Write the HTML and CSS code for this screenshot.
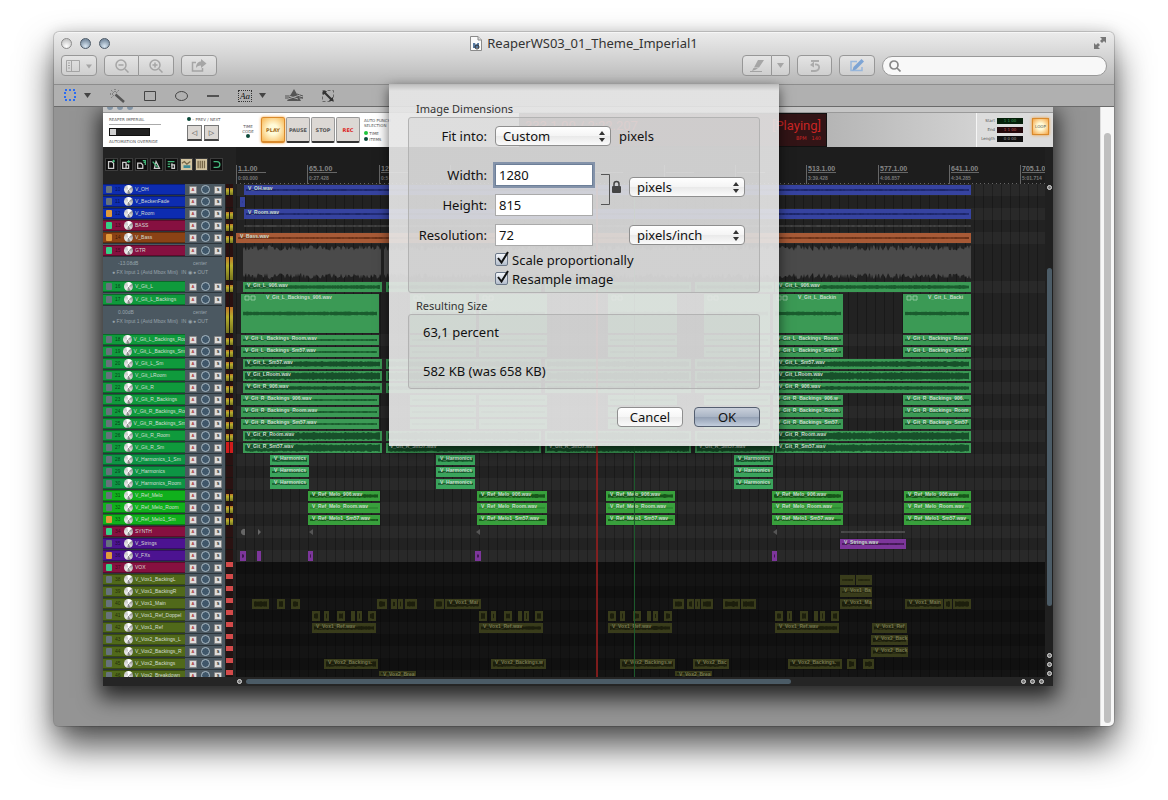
FILE: index.html
```html
<!DOCTYPE html>
<html lang="en">
<head>
  <meta charset="UTF-8">
  <meta name="viewport" content="width=device-width, initial-scale=1.0">
  <title>ReaperWS03_01_Theme_Imperial1</title>
  <link rel="stylesheet" href="styles.css">
</head>
<body>
  <main class="window">
    <header class="chrome">
      <div class="titlebar">
        <div class="lights">
          <button class="light idle" aria-label="Close"></button>
          <button class="light" aria-label="Minimize"></button>
          <button class="light" aria-label="Zoom"></button>
        </div>
        <h1 class="title">
          <svg width="12" height="15" viewBox="0 0 12 15"><path d="M.5.5h7.500l3.500 3.500v10.500H.5z" fill="#fafafa" stroke="#8a8a8a"/><path d="M8 .5V4h3.500" fill="#ddd" stroke="#8a8a8a"/><path d="M3 7h2l1 2 1.500-2H9v5H3z" fill="#56789f"/><circle cx="7" cy="11" r="2" fill="none" stroke="#333"/></svg>
          ReaperWS03_01_Theme_Imperial1
        </h1>
        <button class="fullscreen" aria-label="Full screen">
          <svg width="14" height="14" viewBox="0 0 14 14" fill="#777"><path d="M7 1h6v6l-2-2-2 2-2-2 2-2zM1 7l2 2 2-2 2 2-2 2 2 2H1z"/></svg>
        </button>
      </div>
      <div class="toolbar">
        <button class="tool wide" aria-label="Sidebar">
          <svg width="26" height="12" viewBox="0 0 26 12" fill="none" stroke="#999"><path d="M.5.5h13v11H.500zM5.500 1v10"/><path d="M2 3h2M2 5.500h2M2 8h2"/><path d="M20 4.500h6l-3 4z" fill="#999" stroke="none"/></svg>
        </button>
        <div class="segment">
          <button class="tool" aria-label="Zoom out"><svg width="14" height="14" viewBox="0 0 14 14" fill="none" stroke="#999" stroke-width="1.500"><circle cx="6" cy="6" r="5"/><path d="M10 10l3.500 3.500M3.500 6h5"/></svg></button>
          <button class="tool" aria-label="Zoom in"><svg width="14" height="14" viewBox="0 0 14 14" fill="none" stroke="#999" stroke-width="1.500"><circle cx="6" cy="6" r="5"/><path d="M10 10l3.500 3.500M3.500 6h5M6 3.500v5"/></svg></button>
        </div>
        <button class="tool wide" aria-label="Share">
          <svg width="16" height="13" viewBox="0 0 16 13"><path d="M5 3.500H1.500v8.500h10V9" fill="none" stroke="#999" stroke-width="1.500"/><path d="M10 0l5.500 4.500L10 9V6.500C7 6.500 6 7.500 5 9c0-4 2-6.500 5-6.500z" fill="#999"/></svg>
        </button>
        <span class="spacer"></span>
        <div class="segment">
          <button class="tool mark" aria-label="Highlight"><svg width="15" height="12" viewBox="0 0 15 12" fill="#999"><path d="M8 0h6L9 7.500H4zM3.500 8H8l-2 1.500L2 11zM0 11h12v1H0z"/></svg></button>
          <button class="tool arrow" aria-label="Highlight colour"><svg width="7" height="5" viewBox="0 0 7 5"><path d="M0 0h7L3.500 5z" fill="#999"/></svg></button>
        </div>
        <button class="tool rotate" aria-label="Rotate"><svg width="12" height="12" viewBox="0 0 12 12"><path d="M2 1h8M6 4.500c6-.5 5 6 0 6.500H2" fill="none" stroke="#a0a0a0" stroke-width="1.800"/><path d="M1 5l4-3.500v6z" fill="#a0a0a0"/></svg></button>
        <button class="tool wide edit" aria-label="Edit"><svg width="16" height="14" viewBox="0 0 16 14"><path d="M8 2.500H2v9h11V8" fill="none" stroke="#8ab0dd" stroke-width="1.500"/><path d="M12.500 0L15 2.500 7 10.500l-3.500 1 1-3.500z" fill="#6697d3"/></svg></button>
        <label class="search">
          <svg width="12" height="12" viewBox="0 0 12 12" fill="none" stroke="#888" stroke-width="1.700"><circle cx="5" cy="5" r="4"/><path d="M8 8l3.500 3.500"/></svg>
          <input type="search" aria-label="Search">
        </label>
      </div>
    </header>

    <nav class="markup" aria-label="Markup tools">
      <button aria-label="Selection"><svg width="27" height="13" viewBox="0 0 27 13"><rect x="1" y="1" width="10" height="10" fill="none" stroke="#2b6cf0" stroke-width="2" stroke-dasharray="2 2"/><path d="M20 4h7l-3.500 5z" fill="#444"/></svg></button>
      <button aria-label="Instant alpha"><svg width="15" height="14" viewBox="0 0 15 14" stroke="#555" fill="none"><path d="M5.500 5.500l8.500 7.500" stroke-width="2.500"/><path d="M5 0v3M0 5h3M1.500 1.500l2 2M8.500 1.500l-2 2M1.500 8.500l2-2" stroke-dasharray="1 1"/></svg></button>
      <button aria-label="Rectangle"><svg width="12" height="10" viewBox="0 0 12 10"><path d="M.5.5h11v9H.500z" fill="none" stroke="#444"/></svg></button>
      <button aria-label="Oval"><svg width="13" height="10" viewBox="0 0 13 10"><ellipse cx="6.500" cy="5" rx="6" ry="4.500" fill="none" stroke="#444"/></svg></button>
      <button aria-label="Line"><svg width="12" height="4" viewBox="0 0 12 4"><path d="M0 2h12" stroke="#333" stroke-width="1.500"/></svg></button>
      <button class="text-tool" aria-label="Text"><span class="aa">Aa</span><svg width="7" height="5" viewBox="0 0 7 5"><path d="M0 0h7L3.500 5z" fill="#444"/></svg></button>
      <button aria-label="Adjust color"><svg width="18" height="13" viewBox="0 0 18 13"><path d="M9 0l7 12H2z" fill="#555"/><path d="M0 7l6 0M0 9h5M12 5l6 2M12 7l6 2M12 9h6" stroke="#555"/><path d="M3 10l12-4M4 7l9 3" stroke="#aaa"/></svg></button>
      <button aria-label="Adjust size"><svg width="12" height="12" viewBox="0 0 12 12"><path d="M.5.5h11v11H.500z" fill="none" stroke="#666" stroke-dasharray="3 2"/><path d="M1 1h4L4 2.500 9.500 8 11 7v4H7l1-1.500L2.500 4 1 5z" fill="#333"/></svg></button>
    </nav>

    <section class="viewer">
      <div class="page">
        <div class="daw-title"><i></i><i></i><i></i></div>
        <div class="transport">
          <div class="brand">
            <span class="tiny ruled">REAPER IMPERIAL</span>
            <span class="fader"></span>
            <span class="tiny">AUTOMATION OVERRIDE</span>
          </div>
          <div class="skip">
            <div class="tiny"><i class="led"></i> – PREV / NEXT</div>
            <div class="pair">
              <span class="key">◁</span>
              <span class="key">▷</span>
            </div>
          </div>
          <div class="timecode tiny">TIME<br>CODE<br><i class="led"></i></div>
          <div class="keys">
            <span class="key big play">PLAY</span>
            <span class="key big">PAUSE</span>
            <span class="key big">STOP</span>
            <span class="key big rec">REC</span>
          </div>
          <div class="punch tiny">AUTO PUNCH<br>SELECTION
            <div class="modes"><i class="led on"></i> TIME<br><i class="led"></i> ITEMS</div>
          </div>
          <div class="display">
            <div class="readout"><span>333.1.00 / 2:22.207</span><span>[Playing]</span></div>
            <div class="bpm">BPM &nbsp; 140</div>
          </div>
          <div class="plate"></div>
          <div class="range">
            <dl>
              <dt>Start</dt><dd class="green">1 1 00</dd>
              <dt>End</dt><dd class="red">1 1 00</dd>
              <dt>Length</dt><dd>0 0 00</dd>
            </dl>
            <span class="loop">LOOP</span>
          </div>
        </div>

        <div class="desk">
          <div class="mixer">
            <div class="icons">
              <svg viewBox="0 0 13 13"><path d="M3 3h4l2 2v6H3z"/><path class="g" d="M9 1v3M7.500 2.500h3"/></svg>
              <svg viewBox="0 0 13 13"><path d="M2 4h4v7H2zM6 7h3v4H6"/><path class="g" d="M7 3h4M9 1.500v3"/></svg>
              <svg viewBox="0 0 13 13"><path d="M2 5h4l2 2v4H2z"/><path class="g" d="M8 2h3v5M9 4h2"/></svg>
              <svg viewBox="0 0 13 13"><path d="M4 11l2-8 4 8z"/><path class="g" d="M2 3l6 7"/></svg>
              <svg viewBox="0 0 13 13"><path class="g" d="M2 3h8M2 6h3M2 9h3"/><path d="M7 5v6h3V7H6"/></svg>
              <svg class="lit" viewBox="0 0 13 13"><path class="d" d="M1 5l3-2 3 3 4-3"/><path class="t" d="M3 9h8"/></svg>
              <svg class="lit" viewBox="0 0 13 13"><path class="d" d="M2.500 2v9M5 2v9M7.500 2v9M10 2v9"/></svg>
              <svg viewBox="0 0 13 13"><path class="g" d="M3 3h4a3.500 3.500 0 0 1 0 7H3"/></svg>
            </div>
            <ul class="tracks" id="tracks"></ul>
          </div>
          <div class="arrange">
            <svg id="timeline" width="810" height="530" aria-label="Arrangement"></svg>
          </div>
          <div class="vscroll">
            <i class="nub"></i>
            <span class="vthumb"></span>
            <span class="nubs"><i class="nub"></i><i class="nub"></i><i class="nub"></i></span>
          </div>
        </div>
        <div class="hscroll">
          <i class="nub"></i>
          <span class="hthumb"></span>
          <span class="nubs"><i class="nub"></i><i class="nub"></i><i class="nub"></i></span>
        </div>
      </div>
      <div class="scroller"><span></span></div>
    </section>

    <form class="sheet" role="dialog" aria-label="Adjust size">
      <fieldset>
        <legend>Image Dimensions</legend>
        <div class="group">
          <div class="fit">
            <label for="fit">Fit into:</label>
            <span class="select">
              <select id="fit"><option>Custom</option></select>
              <svg width="6" height="11" viewBox="0 0 6 11"><path d="M0 4l3-4 3 4zM0 7l3 4 3-4z" fill="#333"/></svg>
            </span>
            <span>pixels</span>
          </div>
          <div class="sizes">
            <label for="width">Width:</label>
            <input class="focused" id="width" type="text" value="1280">
            <div class="link">
              <svg width="24" height="32" viewBox="0 0 24 32"><path d="M0 .5h8.500v30H0" fill="none" stroke="#555"/><rect x="11" y="12" width="9" height="7" rx="1" fill="#444"/><path d="M13 12v-2a2.500 2.500 0 0 1 5 0v2" fill="none" stroke="#444" stroke-width="1.500"/></svg>
            </div>
            <span class="select unit">
              <select aria-label="Size unit"><option>pixels</option></select>
              <svg width="6" height="11" viewBox="0 0 6 11"><path d="M0 4l3-4 3 4zM0 7l3 4 3-4z" fill="#333"/></svg>
            </span>
            <label for="height">Height:</label>
            <input id="height" type="text" value="815">
            <label for="resolution">Resolution:</label>
            <input id="resolution" type="text" value="72">
            <span class="select res">
              <select aria-label="Resolution unit"><option>pixels/inch</option></select>
              <svg width="6" height="11" viewBox="0 0 6 11"><path d="M0 4l3-4 3 4zM0 7l3 4 3-4z" fill="#333"/></svg>
            </span>
          </div>
          <div class="checks">
            <label><span class="check"><input type="checkbox" checked><svg width="15" height="15" viewBox="0 0 15 15"><path d="M3 7l3.500 4.500L13 1" fill="none" stroke="#111" stroke-width="2"/></svg></span>Scale proportionally</label>
            <label><span class="check"><input type="checkbox" checked><svg width="15" height="15" viewBox="0 0 15 15"><path d="M3 7l3.500 4.500L13 1" fill="none" stroke="#111" stroke-width="2"/></svg></span>Resample image</label>
          </div>
        </div>
      </fieldset>
      <fieldset>
        <legend>Resulting Size</legend>
        <div class="group result">
          <p>63,1 percent</p>
          <p>582 KB (was 658 KB)</p>
        </div>
      </fieldset>
      <div class="actions">
        <button type="button">Cancel</button>
        <button type="button" class="default">OK</button>
      </div>
    </form>
  </main>

  <script src="tracks.js"></script>
</body>
</html>
```
FILE: styles.css
```css
* {
  box-sizing: border-box;
}

body {
  margin: 0;
  padding: 32px 54px 74px;
  background: #fff;
  color: #111;
  font-family: "Noto Sans", "Open Sans", sans-serif;
  font-size: 13px;
  overflow-x: hidden;
}

button,
input,
select {
  font: inherit;
  color: inherit;
  margin: 0;
}

button {
  padding: 0;
  border: none;
  background: none;
}

.window {
  position: relative;
  border-radius: 5px;
  background: #949494;
  box-shadow: 0 0 0 1px rgba(0, 0, 0, 0.15), 0 0 14px rgba(0, 0, 0, 0.15), 0 20px 36px rgba(0, 0, 0, 0.7);
}

/* title bar and toolbar */
.chrome {
  padding: 0 7px 8px;
  background: linear-gradient(#ebebeb, #d2d2d2 50%, #b6b6b6);
  border-top: 1px solid #f6f6f6;
  border-bottom: 1px solid #8c8c8c;
  border-radius: 5px 5px 0 0;
}

.titlebar {
  display: grid;
  grid-template-columns: 1fr auto 1fr;
  align-items: center;
  height: 20px;
}

.lights {
  display: flex;
  gap: 8px;
}

.light {
  width: 11px;
  height: 11px;
  border: 1px solid #4d5a67;
  border-radius: 50%;
  background: radial-gradient(circle at 50% 80%, #d8e6f2, #7d90a3 75%);
}

.light.idle {
  border-color: #8b8b8b;
  background: radial-gradient(circle at 50% 80%, #fff, #c8c8c8 75%);
}

.title {
  display: flex;
  align-items: center;
  gap: 5px;
  margin: 0;
  font-size: 13px;
  font-weight: 400;
  color: #333;
}

.fullscreen {
  justify-self: end;
  display: flex;
}

.toolbar {
  display: flex;
  align-items: center;
  gap: 7px;
  margin-top: 2px;
}

.spacer {
  flex: 1;
}

.tool {
  display: flex;
  align-items: center;
  justify-content: center;
  width: 35px;
  height: 21px;
  border: 1px solid #979797;
  border-radius: 4px;
  background: linear-gradient(#e4e4e4, #cfcfcf);
}

.tool svg {
  opacity: 0.8;
}

.tool.wide {
  width: 36px;
}

.tool.mark {
  width: 30px;
}

.tool.arrow {
  width: 18px;
}

.segment {
  display: flex;
}

.segment .tool:first-child {
  border-radius: 4px 0 0 4px;
}

.segment .tool:last-child {
  border-left: none;
  border-radius: 0 4px 4px 0;
}

.search {
  display: flex;
  align-items: center;
  gap: 6px;
  width: 225px;
  height: 20px;
  padding: 0 6px;
  border: 1px solid #999;
  border-radius: 10px;
  background: #f8f8f8;
}

.search input {
  flex: 1;
  min-width: 0;
  border: none;
  outline: none;
  background: none;
}

.markup {
  display: flex;
  align-items: center;
  gap: 19px;
  height: 22px;
  padding: 0 10px;
  background: #b0b0b0;
  border-bottom: 1px solid #6a6a6a;
}

.markup button {
  display: flex;
  align-items: center;
}

.markup .text-tool {
  gap: 7px;
}

.aa {
  padding: 0 1px;
  border: 1px dotted #333;
  font: italic 9px/10px "Liberation Serif", serif;
}

/* document */
.viewer {
  display: flex;
  background: #949494;
  border-radius: 0 0 5px 5px;
  overflow: hidden;
}

.page {
  flex: 1;
  min-width: 0;
  margin: 0 47px 40px 49px;
  background: #222;
  box-shadow: 0 8px 20px 4px rgba(0, 0, 0, 0.75);
  font-family: "DejaVu Sans", sans-serif;
}

.scroller {
  width: 14px;
  padding: 26px 3px 3px;
  background: #f7f7f7;
  border-left: 1px solid #ddd;
}

.scroller span {
  display: block;
  height: 100%;
  border-radius: 4px;
  background: #bfbfbf;
}

.daw-title {
  display: flex;
  gap: 4px;
  height: 6px;
  padding-left: 4px;
  background: #c6c6c6;
  border-bottom: 1px solid #999;
}

.daw-title i {
  width: 6px;
  height: 3px;
  border-radius: 0 0 3px 3px;
  background: #8294a5;
}

.transport {
  display: flex;
  height: 34px;
  background: linear-gradient(90deg, #fff, #fff 30%, #ddd);
  color: #555;
}

.tiny {
  font-size: 4px;
  line-height: 5px;
}

.brand {
  display: flex;
  flex-direction: column;
  justify-content: space-between;
  width: 78px;
  padding: 4px 0 3px 6px;
}

.ruled {
  width: 52px;
  padding-bottom: 2px;
  border-bottom: 1px solid #aaa;
}

.fader {
  width: 41px;
  height: 8px;
  background: linear-gradient(90deg, #d0d0d0 6px, #222 6px);
  border: 1px solid #111;
}

.skip {
  width: 56px;
  padding: 4px 0 0 6px;
}

.pair {
  display: flex;
  gap: 2px;
  margin-top: 3px;
}

.key {
  display: flex;
  align-items: center;
  justify-content: center;
  width: 15px;
  height: 16px;
  border: 1px solid #777;
  border-bottom: 2px solid #444;
  background: #dcd8d4;
  color: #333;
  font-size: 7px;
}

.led {
  display: inline-block;
  width: 4px;
  height: 4px;
  border-radius: 50%;
  background: #0c4a3a;
}

.led.on {
  background: #1fc43c;
}

.timecode {
  width: 22px;
  padding-top: 11px;
  text-align: center;
}

.keys {
  display: flex;
  gap: 1px;
  width: 101px;
  padding: 4px 0 0 2px;
}

.key.big {
  width: 24px;
  height: 26px;
  border-color: #999;
  border-bottom-color: #333;
  border-radius: 2px;
  font-size: 5px;
  font-weight: 700;
  color: #555;
}

.key.play {
  border-color: #d98a2c;
  background: radial-gradient(#fffbd8 30%, #f8b550);
  box-shadow: 0 0 3px #f09a30;
  color: #a06a20;
}

.key.rec {
  color: #d22;
}

.punch {
  flex: 1;
  padding: 5px 0 0 4px;
}

.modes {
  margin-top: 3px;
  line-height: 6px;
}

.display {
  width: 308px;
  padding: 3px 5px 0;
  background: #321416;
  border: 1px solid #111;
  color: #c82424;
}

.readout {
  display: flex;
  justify-content: space-between;
  font: 13px/18px Roboto, sans-serif;
}

.bpm {
  text-align: right;
  font-size: 5px;
  line-height: 6px;
}

.plate {
  width: 150px;
  background: linear-gradient(90deg, #b5b5b5, #d2d2d2);
  border-right: 1px solid #f5f5f5;
}

.range {
  display: flex;
  align-items: center;
  gap: 9px;
  width: 76px;
  padding-left: 4px;
  background: #dcdcdc;
}

.range dl {
  display: grid;
  grid-template-columns: 14px 26px;
  gap: 3px 2px;
  margin: 0;
  font-size: 4px;
  line-height: 6px;
}

.range dt {
  text-align: right;
}

.range dd {
  margin: 0;
  background: #111;
  color: #999;
  text-align: center;
}

.range .green {
  background: #06200a;
  color: #3b9a55;
}

.range .red {
  background: #25090c;
  color: #b55;
}

.loop {
  width: 17px;
  height: 17px;
  margin-bottom: 8px;
  border: 1px solid #d98a2c;
  background: radial-gradient(#fffbd8 30%, #f5a545);
  box-shadow: 0 0 3px #f09a30;
  font-size: 4px;
  line-height: 15px;
  text-align: center;
}

.desk {
  display: flex;
  height: 530px;
}

.mixer {
  width: 133px;
  overflow: hidden;
}

.icons {
  display: flex;
  gap: 2px;
  height: 37px;
  padding: 11px 0 0 2px;
}

.icons svg {
  width: 13px;
  height: 13px;
  background: #0d0d0d;
  border: 1px solid #3c3c3c;
  fill: none;
  stroke: #ccc;
  stroke-width: 1.5;
}

.icons .g {
  stroke: #45b97c;
}

.icons .d {
  stroke: #776748;
}

.icons .t {
  stroke: #3d8a96;
  stroke-width: 3;
}

.icons .lit {
  background: #d3c4a0;
}

/* track list, filled by tracks.js */
.tracks {
  margin: 0;
  padding: 0;
  list-style: none;
}

.track {
  display: grid;
  grid-template-columns: 1fr 7px;
  column-gap: 1px;
  padding-right: 3px;
}

.strip {
  padding: 0 3px 0 0;
  background: #4b5861;
  overflow: hidden;
}

.tall .strip {
  padding-top: 1px;
}

.row {
  display: flex;
  align-items: center;
  gap: 4px;
  height: 12px;
  border-bottom: 1px solid #2c353b;
}

.name {
  display: flex;
  align-items: center;
  gap: 2px;
  flex: 1;
  min-width: 0;
  height: 11px;
  padding-left: 3px;
  border-top: 1px solid rgba(0, 0, 0, 0.3);
  border-bottom: 1px solid rgba(0, 0, 0, 0.3);
  color: #d4dcd4;
  font: 5px/9px "Liberation Sans", sans-serif;
  white-space: nowrap;
  overflow: hidden;
}

.name b {
  width: 8px;
  padding-left: 1px;
  color: rgba(0, 0, 0, 0.6);
  font-weight: 400;
}

.name i,
.button {
  width: 6px;
  height: 7px;
  flex: none;
  border-radius: 1px;
  background: #66727c;
}

.name .green {
  background: #35cf86;
}

.name .orange {
  background: #e09a3a;
}

.name .dial,
.pan {
  width: 9px;
  height: 9px;
  flex: none;
  border-radius: 50%;
  background: conic-gradient(#fff 40deg, #999 60deg, #ddd 140deg, #777 170deg, #eee 220deg, #ccc 320deg, #fff);
}

.pan {
  border: 1px solid #a9bac4;
  background: #40576a;
}

.button {
  width: 8px;
  height: 8px;
  background: #dcdcdc;
  border: 1px solid #888;
  color: #a33;
  font: 700 4px/6px "Liberation Sans", sans-serif;
  text-align: center;
}

.button.solo {
  color: #222;
}

.detail {
  padding: 2px 6px;
  color: #98a4ac;
  font: 5px/9px "Liberation Sans", sans-serif;
}

.detail div {
  display: flex;
  justify-content: space-between;
  padding: 0 9px;
}

.detail .input {
  padding: 0 8px 0 3px;
}

.meter {
  background: linear-gradient(90deg, transparent 3px, #1a1512 3px, #1a1512 4px, transparent 4px),
    linear-gradient(#2a1010 35%, #c07028 35%, #b5ad2c 60%, #77751f);
  border-bottom: 1px solid #1a1512;
}

.meter.off {
  background: #2a1212;
}

.meter.hot {
  background: linear-gradient(90deg, transparent 3px, #5a1010 3px, #5a1010 4px, transparent 4px), #d01c1c;
}

.meter.muted {
  background: linear-gradient(#d34a4a 5px, #241414 5px);
}

.arrange {
  flex: 1;
  min-width: 0;
  overflow: hidden;
}

.arrange svg {
  display: block;
}

.ruler {
  fill: #858585;
  font: 700 7px "Liberation Sans", sans-serif;
}

.seconds {
  fill: #777;
  font: 700 5px "Liberation Sans", sans-serif;
}

.clip-label {
  fill: #c9dccc;
  font: 700 5px "Liberation Sans", sans-serif;
}

.clip-label.muted {
  fill: #767850;
}

.vscroll {
  display: flex;
  flex-direction: column;
  align-items: center;
  width: 8px;
  padding: 38px 0 1px;
  background: #202020;
}

.vthumb {
  width: 5px;
  height: 338px;
  margin: 78px 0 auto;
  border-radius: 3px;
  background: #4b5b66;
}

.nub {
  display: block;
  flex: none;
  width: 5px;
  height: 5px;
  border: 1px solid #ddd;
  border-radius: 50%;
  background: #777;
}

.nubs {
  display: flex;
  gap: 4px;
}

.vscroll .nubs {
  flex-direction: column;
}

.hscroll {
  display: flex;
  align-items: center;
  gap: 4px;
  height: 9px;
  padding: 0 9px 0 134px;
  background: #252525;
}

.hthumb {
  width: 545px;
  height: 5px;
  margin-right: auto;
  border-radius: 3px;
  background: #4b5b66;
}

/* sheet that drops from the toolbar */
.sheet {
  position: absolute;
  top: 52px;
  left: 50%;
  width: 390px;
  transform: translateX(-50%);
  padding: 17px 19px 19px;
  background: linear-gradient(rgba(190, 190, 190, 0.92), rgba(230, 230, 230, 0.92) 7px);
  box-shadow: 0 4px 12px rgba(0, 0, 0, 0.6);
}

.sheet fieldset {
  margin: 0 0 5px;
  padding: 0;
  border: none;
}

.sheet legend {
  padding: 0 8px;
  font-size: 11px;
  line-height: 16px;
  color: #333;
}

.group {
  padding: 8px 14px 4px 0;
  border: 1px solid #b3b3b3;
  border-radius: 3px;
  background: rgba(0, 0, 0, 0.04);
}

.fit,
.sizes {
  display: grid;
  grid-template-columns: 78px 116px auto;
  justify-content: start;
  align-items: center;
  gap: 8px;
}

.sizes {
  grid-template-columns: 78px 98px 20px 116px;
  margin-top: 18px;
}

.fit label,
.sizes label {
  text-align: right;
}

.link {
  grid-column: 3;
  grid-row: 1 / 3;
}

.unit {
  grid-column: 4;
  grid-row: 1 / 3;
  margin-bottom: 6px;
}

.res {
  grid-column: 4;
}

.link svg {
  display: block;
}

.sizes input {
  width: 98px;
  height: 22px;
  padding: 0 3px;
  border: 1px solid #aaa;
  background: #fff;
  outline: none;
}

.sizes .focused {
  border-color: #6d7f98;
  box-shadow: 0 0 0 2px #8493aa;
}

.select {
  position: relative;
  display: block;
}

.select select {
  display: block;
  width: 116px;
  height: 20px;
  padding: 0 7px;
  appearance: none;
  border: 1px solid #8f8f8f;
  border-radius: 4px;
  background: linear-gradient(#fff, #f4f4f4 50%, #e9e9e9 50%, #fafafa);
  line-height: 18px;
}

.select svg {
  position: absolute;
  top: 5px;
  right: 6px;
  pointer-events: none;
}

.checks {
  display: flex;
  flex-direction: column;
  margin: 4px 0 0 86px;
}

.checks label {
  display: flex;
  align-items: center;
  gap: 2px;
  height: 19px;
}

.check {
  position: relative;
  display: flex;
  width: 15px;
}

.check input {
  width: 13px;
  height: 13px;
  appearance: none;
  border: 1px solid #6b7788;
  border-radius: 2px;
  background: linear-gradient(#f4f6fa, #b3bdcc);
}

.check svg {
  position: absolute;
  top: -2px;
  left: 0;
  pointer-events: none;
}

.result {
  padding: 8px 14px;
}

.result p {
  margin: 0;
  line-height: 18px;
}

.result p + p {
  margin-top: 21px;
}

.actions {
  display: flex;
  justify-content: flex-end;
  gap: 11px;
  margin-top: 18px;
}

.actions button {
  width: 66px;
  height: 20px;
  border: 1px solid #8f8f8f;
  border-radius: 4px;
  background: linear-gradient(#fff, #f6f6f6 50%, #ebebeb 50%, #fafafa);
}

.actions .default {
  border-color: #555f70;
  background: linear-gradient(#c9d0db, #a9b4c4 50%, #929fb3 50%, #c3cedd);
}
```
FILE: tracks.js
```javascript
var BLUE = '#0d2cb0', WINE = '#861040', BROWN = '#8a4215', GREEN = '#0f9a3c';
var TEAL = '#0d9444', LIME = '#10b01c', VIOLET = '#4c1391', OLIVE = '#50691a';

// name, colour, folder light, meter, height
var tracks = [
  ['V_OH', BLUE, '', ''], ['V_BeckenFade', BLUE, '', 'off'], ['V_Room', BLUE, 'orange', ''],
  ['BASS', WINE, 'green', ''], ['V_Bass', BROWN, 'orange', ''], ['GTR', WINE, 'green', '', 37],
  ['V_Git_L', GREEN, '', ''], ['V_Git_L_Backings', GREEN, '', '', 41],
  ['V_Git_L_Backings_Room', GREEN, '', ''], ['V_Git_L_Backings_Sm', GREEN, '', ''],
  ['V_Git_L_Sm', GREEN, '', ''], ['V_Git_LRoom', GREEN, '', ''], ['V_Git_R', GREEN, '', ''],
  ['V_Git_R_Backings', GREEN, '', ''], ['V_Git_R_Backings_Room', GREEN, '', ''],
  ['V_Git_R_Backings_Sm', GREEN, '', ''], ['V_Git_R_Room', GREEN, '', ''], ['V_Git_R_Sm', GREEN, '', 'hot'],
  ['V_Harmonics_1_Sm', TEAL, '', 'off'], ['V_Harmonics', TEAL, '', 'off'], ['V_Harmonics_Room', TEAL, '', 'off'],
  ['V_Ref_Melo', LIME, '', ''], ['V_Ref_Melo_Room', LIME, '', ''], ['V_Ref_Melo1_Sm', LIME, 'orange', ''],
  ['SYNTH', WINE, 'green', 'off'], ['V_Strings', VIOLET, '', 'off'], ['V_FXs', VIOLET, 'orange', 'off'],
  ['VOX', WINE, 'green', 'muted'], ['V_Vox1_BackingL', OLIVE, '', 'muted'], ['V_Vox1_BackingR', OLIVE, '', 'muted'],
  ['V_Vox1_Main', OLIVE, '', 'muted'], ['V_Vox1_Ref_Doppel', OLIVE, '', 'muted'], ['V_Vox1_Ref', OLIVE, '', 'muted'],
  ['V_Vox2_Backings_L', OLIVE, '', 'muted'], ['V_Vox2_Backings_R', OLIVE, '', 'muted'],
  ['V_Vox2_Backings', OLIVE, '', 'muted'], ['V_Vox2_Breakdown', OLIVE, '', 'muted']
];

var full = [[7, 146], [150, 305], [309, 455], [459, 538], [539, 735]];
var backing = [[5, 143], [174, 240], [243, 311], [372, 441], [468, 534], [537, 607], [667, 735]];
var harm = [[34, 73], [200, 239], [498, 537]];
var melo = [[72, 144], [241, 311], [370, 439], [536, 607], [668, 735]];
var phrases = [76, 243, 372, 539];

// track number -> file label, fill, wave colour, wave height, spans
var clips = {
  10: ['V_OH.wav', '#3643a0', '#1c2668', 1, [[8, 735]]],
  11: ['', '#3643a0', '#1c2668', 0, [[4, 9]]],
  12: ['V_Room.wav', '#3643a0', '#1c2668', 1, [[8, 735]]],
  14: ['V_Bass.wav', '#a85a36', '#6b3218', 1, [[0, 735]]],
  16: ['V_Git_L_906.wav', '#3b9a55', '#1a5c2e', 2, full],
  17: ['V_Git_L_Backings_906.wav', '#3b9a55', '#1a5c2e', 2, backing],
  18: ['V_Git_L_Backings_Room.wav', '#3b9a55', '#1a5c2e', 1, backing],
  19: ['V_Git_L_Backings_Sm57.wav', '#3b9a55', '#1a5c2e', 1, backing],
  20: ['V_Git_L_Sm57.wav', '#3b9a55', '#17502a', 3, full],
  21: ['V_Git_LRoom.wav', '#3b9a55', '#17502a', 4, full],
  22: ['V_Git_R_906.wav', '#3b9a55', '#17502a', 2, full],
  23: ['V_Git_R_Backings_906.wav', '#3b9a55', '#1a5c2e', 1, backing],
  24: ['V_Git_R_Backings_Room.wav', '#3b9a55', '#1a5c2e', 1, backing],
  25: ['V_Git_R_Backings_Sm57.wav', '#3b9a55', '#1a5c2e', 1, backing],
  26: ['V_Git_R_Room.wav', '#3b9a55', '#17502a', 4, full],
  27: ['V_Git_R_Sm57.wav', '#3b9a55', '#17502a', 4, full],
  28: ['V_Harmonics_1', '#3aa45c', '#17562c', 2, harm],
  29: ['V_Harmonics_2', '#3aa45c', '#17562c', 1, harm],
  30: ['V_Harmonics_Ro', '#3aa45c', '#17562c', 1, harm],
  31: ['V_Ref_Melo_906.wav', '#38a03c', '#17561a', 2, melo],
  32: ['V_Ref_Melo_Room.wav', '#38a03c', '#17561a', 0, melo],
  33: ['V_Ref_Melo1_Sm57.wav', '#38a03c', '#17561a', 1, melo],
  35: ['V_Strings.wav', '#7d369b', '#3f1850', 1, [[604, 670]]],
  36: ['', '#7d369b', '#3f1850', 2, [[4, 10], [21, 25], [72, 77], [239, 245], [536, 541]]],
  38: ['', '#393c1b', '#24260f', 1, [[604, 619], [620, 636]]],
  39: ['V_Vox1_Backing', '#393c1b', '#24260f', 1, [[604, 636]]],
  40: ['V_Vox1_Main.wav', '#393c1b', '#1c1e0c', 3, [[16, 33], [41, 49], [55, 64], [141, 151], [155, 161], [162, 167],
    [169, 181], [198, 208], [209, 245], [437, 448], [451, 458], [459, 464], [465, 477], [487, 504], [505, 520],
    [604, 636], [669, 707], [708, 716], [717, 735]]],
  41: ['', '#393c1b', '#1c1e0c', 3, []],
  42: ['V_Vox1_Ref.wav', '#393c1b', '#1c1e0c', 2, [[76, 140], [243, 307], [372, 436], [539, 603], [636, 671]]],
  43: ['V_Vox2_Backings', '#393c1b', '#1c1e0c', 2, [[635, 672]]],
  44: ['V_Vox2_Backings', '#393c1b', '#1c1e0c', 2, [[635, 672]]],
  45: ['V_Vox2_Backings.wav', '#393c1b', '#1c1e0c', 3, [[88, 142], [255, 310], [384, 439], [457, 493], [552, 606], [611, 620], [627, 638]]],
  46: ['V_Vox2_Breakdown', '#393c1b', '#1c1e0c', 1, [[143, 180], [439, 476]]]
};

phrases.forEach(function (x) {
  [[0, 8], [12, 17], [25, 33], [39, 43], [45, 50], [56, 64]].forEach(function (p) {
    clips[41][4].push([x + p[0], x + p[1]]);
  });
});

var seed = 7;
function random() {
  seed = (seed * 16807) % 2147483647;
  return seed / 2147483647;
}

function wave(x1, x2, mid, amp, fill) {
  var top = '', bottom = '', a;
  for (var x = x1; x <= x2; x += 1) {
    a = amp * (0.65 + random() * 0.35);
    top += ' ' + x + ',' + (mid - a).toFixed(1);
    bottom = ' ' + x + ',' + (mid + a).toFixed(1) + bottom;
  }
  return '<polygon fill="' + fill + '" points="' + top + bottom + '"/>';
}

// the sheet hides this part of the timeline, so it gets no labels
function covered(x, num) {
  return num < 27 && x > 146 && x < 537;
}

var RULER = 37;
var list = '', lanes = '', items = '', y = RULER;

tracks.forEach(function (t, i) {
  var num = i + 10, h = t[4] || 12;
  if (num === 46) h = 7;

  list += '<li class="track' + (t[4] ? ' tall' : '') + '" style="height:' + h + 'px"><div class="strip"><div class="row">' +
    '<span class="name" style="background:' + t[1] + '"><i class="' + t[2] + '"></i><b>' + num + '</b><i class="dial"></i>' + t[0] + '</span>' +
    '<span class="button">A</span><span class="pan"></span><span class="button solo">S</span></div>' +
    (t[4] ? '<div class="detail"><div><span>' + (num === 15 ? '-13.08dB' : '0.00dB') + '</span><span>center</span></div>' +
      '<div class="input"><span>● FX Input 1 (Avid Mbox Mini)</span><span>IN ◉ ● OUT</span></div></div>' : '') +
    '</div><span class="meter ' + t[3] + '"></span></li>';

  var dark = num > 36;
  lanes += '<rect x="0" y="' + y + '" width="810" height="' + h + '" fill="' +
    (dark ? (i % 2 ? '#101010' : '#141414') : (i % 2 ? '#222' : '#292929')) + '"/>';

  var c = clips[num];
  if (c) {
    c[4].forEach(function (s) {
      var w = s[1] - s[0], mid = y + h / 2;
      items += '<rect x="' + s[0] + '" y="' + (y + 1) + '" width="' + w + '" height="' + (h - 2) + '" fill="' + c[1] + '"/>';
      items += wave(s[0] + 2, s[1] - 2, mid, c[3] || 0.3, c[2]);
      if (num === 17) {
        items += '<path d="M' + (s[0] + 4) + ' ' + (y + 3) + 'h4v4h-4zm6 0h4v4h-4z" fill="none" stroke="#8fc79d"/>';
      }
      if (c[0] && w > 28 && !covered(s[0], num)) {
        var room = Math.floor((w - (num === 17 ? 28 : 4)) / 3);
        items += '<text class="clip-label' + (dark ? ' muted' : '') + '" x="' + (s[0] + (num === 17 ? 25 : 4)) +
          '" y="' + (y + 6) + '">' + c[0].slice(0, room) + '</text>';
      }
    });
  }
  if (num === 13) items += wave(8, 735, y + 6, 0.8, '#505050');
  if (num === 15) items += wave(7, 145, y + 18, 17, '#4a4a4a') + wave(148, 735, y + 18, 17, '#4a4a4a');
  if (num === 34) {
    items += wave(605, 669, y + 6, 1, '#505050');
    items += '<path d="M5 ' + (y + 6) + 'a3 3 0 0 1 4-3v6a3 3 0 0 1-4-3zM22 ' + (y + 3) + 'l3 3-3 3z" fill="#666"/>';
    [73, 240, 537].forEach(function (x) {
      items += '<path d="M' + x + ' ' + (y + 6) + 'l4-3v6z" fill="#555"/>';
    });
  }
  y += h;
});

// ruler: one mark every 64 bars
var ruler = '<rect width="810" height="37" fill="#1d1d1d"/>';
var times = ['0:00.000', '0:27.428', '0:54.857', '1:22.285', '1:49.714', '2:17.142', '2:44.571', '3:12.000',
  '3:39.428', '4:06.857', '4:34.285', '5:01.714'];
times.forEach(function (time, i) {
  var x = Math.round(i * 71.3);
  ruler += '<path d="M' + x + '.5 18v19M' + (x + 2) + ' 25.500h28" stroke="#666"/>';
  if (covered(x, 0)) return;
  var bar = i * 64 + 1 + '.1.00';
  // mark 129 runs under the edge of the sheet
  ruler += '<text class="ruler" x="' + (x + 2) + '" y="24">' + (i === 2 ? bar.slice(0, 2) : bar) + '</text>' +
    '<text class="seconds" x="' + (x + 2) + '" y="33">' + (i === 2 ? time.slice(0, 3) : time) + '</text>';
});
ruler += '<path d="M0 36.500h810" stroke="#666" stroke-dasharray="1 3"/>';

var grid = '<defs><pattern id="beats" width="9" height="9" patternUnits="userSpaceOnUse"><path d="M.5 0v9" stroke="#000" stroke-opacity=".25"/></pattern></defs>' +
  '<rect y="37" width="810" height="493" fill="url(#beats)"/>';

document.getElementById('tracks').innerHTML = list;
document.getElementById('timeline').innerHTML = lanes + grid + items + ruler +
  '<path d="M361 37v493" stroke="#a02020" stroke-width="1.500"/><path d="M398.500 37v493" stroke="#1c5a2c"/>';
```
